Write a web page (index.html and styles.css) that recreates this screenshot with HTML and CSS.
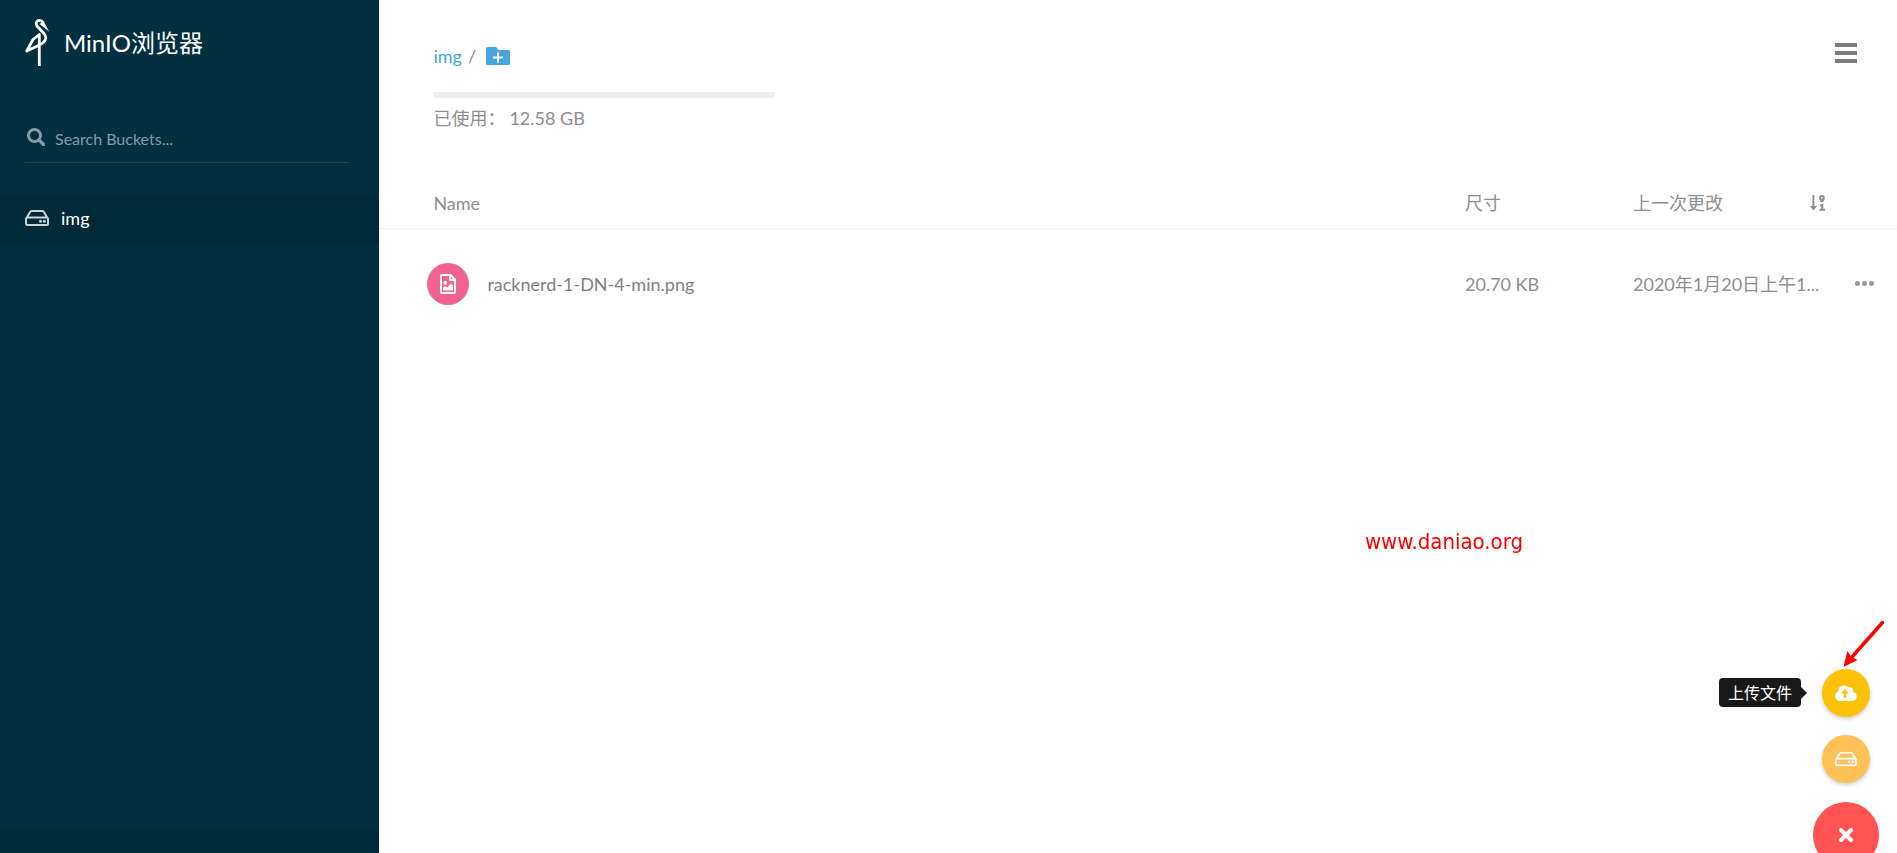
FILE: index.html
```html
<!DOCTYPE html>
<html lang="zh-CN">
<head>
  <meta charset="UTF-8" />
  <meta name="viewport" content="width=device-width, initial-scale=1.0">
  <title>MinIO浏览器</title>
  <link rel="stylesheet" href="styles.css">
</head>
<body>

<svg width="0" height="0" class="sprite" aria-hidden="true">
  <symbol id="icon-drive" viewBox="0 0 24 16">
    <path fill="none" stroke="currentColor" stroke-width="2" stroke-linejoin="round" d="M1.5 8 5.4 1.6Q5.8 1 6.6 1H17.4Q18.2 1 18.6 1.6L22.5 8M2.5 7.5H21.5Q23 7.5 23 9V13.5Q23 15 21.5 15H2.5Q1 15 1 13.5V9Q1 7.5 2.5 7.5Z"/>
    <circle cx="15.5" cy="11.2" r="1.5" fill="currentColor"/>
    <circle cx="19.4" cy="11.2" r="1.5" fill="currentColor"/>
  </symbol>
</svg>

<div class="page">
  <aside class="sidebar">
    <div class="brand">
      <svg class="logo" viewBox="0 0 24 48" aria-hidden="true">
        <path fill="none" stroke="#fff" stroke-width="2.8" stroke-linejoin="round" d="M14.3 47V15.5L8 20.5 1.8 32 14.5 26C20.500 23 22.500 19 19 14.500L12 7C10 4 12 1.4 14.500 1.4 16.500 1.4 17.500 2.500 18.500 4"/>
        <path fill="#fff" d="M14.500 5 18.800 2.600 24 12.500Z"/>
      </svg>
      <h1>MinIO浏览器</h1>
    </div>

    <label class="search">
      <svg viewBox="0 0 18 18" aria-hidden="true">
        <circle cx="7.5" cy="7.5" r="6" fill="none" stroke="currentColor" stroke-width="3"/>
        <path d="M12 12 16.5 16.5" stroke="currentColor" stroke-width="3.4" stroke-linecap="round"/>
      </svg>
      <input type="text" placeholder="Search Buckets..." aria-label="Search Buckets">
    </label>

    <nav class="buckets">
      <a class="bucket active" href="#img">
        <svg viewBox="0 0 24 16" aria-hidden="true"><use href="#icon-drive"/></svg>
        img
      </a>
    </nav>

    <div class="host"></div>
  </aside>

  <main class="content">
    <header class="topbar">
      <div class="path-info">
        <div class="path">
          <a href="#img">img</a>
          <span>/</span>
          <button class="new-path" aria-label="New path">
            <svg viewBox="0 0 24 18" aria-hidden="true">
              <path fill="currentColor" d="M2 0H9.5Q10.500 0 11 1L12 3H22.500Q24 3 24 4.500V16.500Q24 18 22.500 18H1.500Q0 18 0 16.500V2Q0 0 2 0Z"/>
              <path stroke="#fff" stroke-width="2" d="M12 5.500V15.500M7 10.500H17"/>
            </svg>
          </button>
        </div>
        <div class="usage-bar"></div>
        <div class="usage"><span>已使用：</span><span>12.58 GB</span></div>
      </div>
      <button class="menu" aria-label="Menu"><i></i><i></i><i></i></button>
    </header>

    <table class="files">
      <thead>
        <tr>
          <th class="col-name">Name</th>
          <th class="col-size">尺寸</th>
          <th class="col-date">
            <div class="sortable">
              上一次更改
              <svg viewBox="0 0 16 16" aria-hidden="true">
                <path fill="currentColor" d="M2.5 0H4.300V11H7L3.400 15.500 0 11H2.500Z"/>
                <path fill="none" stroke="currentColor" stroke-width="2" d="M13.800 2.900A1.900 1.800 0 1 1 10 2.900 1.900 1.800 0 0 1 13.800 2.900Q13.800 6.300 10.500 6.500M10 10.500 12.300 9.800V14.700M9.500 14.700H15"/>
              </svg>
            </div>
          </th>
          <th class="col-actions"></th>
        </tr>
      </thead>
      <tbody>
        <tr>
          <td class="col-name">
            <div class="file">
              <span class="file-icon">
                <svg viewBox="0 0 16 20" aria-hidden="true">
                  <path fill="none" stroke="#fff" stroke-width="2" stroke-linejoin="round" d="M2 1H10.500L15 5.500V18Q15 19 14 19H2Q1 19 1 18V2Q1 1 2 1ZM10 1V6H15"/>
                  <circle cx="5.200" cy="9" r="1.900" fill="#fff"/>
                  <path fill="#fff" d="M3 16.500V14L5 12 7 13.500 11 9.500 13 11.500V16.500Z"/>
                </svg>
              </span>
              <a href="#file">racknerd-1-DN-4-min.png</a>
            </div>
          </td>
          <td class="col-size">20.70 KB</td>
          <td class="col-date">2020年1月20日上午1...</td>
          <td class="col-actions"><button class="more" aria-label="More"><i></i><i></i><i></i></button></td>
        </tr>
      </tbody>
    </table>
  </main>
</div>

<p class="watermark">www.daniao.org</p>

<div class="fab">
  <svg class="pointer" viewBox="0 0 42 48" aria-hidden="true">
    <path stroke="#f00" stroke-width="3.5" stroke-linecap="round" d="M39.500 2.500 9 37"/>
    <path fill="#f00" d="M0.500 47 4.300 31 8 36.500 14.500 40Z"/>
  </svg>
  <div class="fab-row">
    <span class="tooltip" role="tooltip">上传文件</span>
    <button class="fab-item upload" aria-label="上传文件">
      <svg viewBox="0 0 22 16" aria-hidden="true">
        <path fill="#fff" d="M5 16A5 5 0 0 1 3 6.500 6 6 0 0 1 13.500 2.500 3.500 3.500 0 0 1 18.200 6.800 4.700 4.700 0 0 1 17.500 16Z"/>
        <path fill="#ffc107" d="M10 4 14 8.500H11.200V13H8.800V8.500H6Z"/>
      </svg>
    </button>
  </div>
  <button class="fab-item make-bucket" aria-label="Create bucket">
    <svg viewBox="0 0 24 16" aria-hidden="true"><use href="#icon-drive"/></svg>
  </button>
  <button class="fab-toggle" aria-label="Close">
    <svg viewBox="0 0 16 16" aria-hidden="true"><path stroke="#fff" stroke-width="4" stroke-linecap="round" d="M3 3 13 13M13 3 3 13"/></svg>
  </button>
</div>

</body>
</html>
```
FILE: styles.css
```css
* { box-sizing: border-box; }

body {
  margin: 0;
  color: #8e8e8e;
  background: #fff;
  font-family: Lato, "Noto Sans CJK SC", sans-serif;
  font-size: 18px;
  line-height: 24px;
  overflow: hidden;
}

a { color: inherit; text-decoration: none; }

button {
  padding: 0;
  border: 0;
  background: none;
  color: inherit;
  cursor: pointer;
}

svg { display: block; flex-shrink: 0; }

.sprite { position: absolute; }

.page {
  display: flex;
  min-height: 100vh;
}

/* sidebar */
.sidebar {
  flex: 0 0 20%;
  display: flex;
  flex-direction: column;
  background: #00303f;
}

.brand {
  display: flex;
  align-items: center;
  gap: 15px;
  height: 86px;
  padding-left: 25px;
  color: #fff;
}

.logo { width: 24px; height: 48px; }

h1 {
  margin: 0;
  font-size: 24px;
  font-weight: 400;
}

.search {
  display: flex;
  align-items: center;
  gap: 10px;
  height: 47px;
  margin: 30px 30px 30px 25px;
  padding-left: 2px;
  border-bottom: 1px solid #1c4653;
  color: #809ca4;
}

.search svg { width: 18px; height: 18px; margin-bottom: 4px; }

.search input {
  flex: 1;
  min-width: 0;
  padding: 0;
  border: 0;
  outline: 0;
  background: none;
  color: #fff;
  font: inherit;
  font-size: 16px;
}

.search input::placeholder { color: #809ca4; opacity: 1; }

.bucket {
  display: flex;
  align-items: center;
  gap: 12px;
  height: 52px;
  padding: 0 0 2px 25px;
  color: #fff;
}

.bucket svg { width: 24px; height: 16px; color: #ccd5d8; }

.active { background: #002a37; }

.host {
  height: 22px;
  margin-top: auto;
  background: #002a37;
}

/* content */
.content { flex: 1; min-width: 0; }

.topbar {
  display: flex;
  justify-content: space-between;
  height: 179px;
  padding: 44px 40px 0 54px;
}

.path {
  display: flex;
  align-items: center;
  gap: 6px;
}

.path a, .new-path { color: #46a5e0; }
.new-path { margin-left: 4px; }
.new-path svg { width: 24px; height: 18px; }

.usage-bar {
  width: 342px;
  height: 6px;
  margin: 24px 0 8px;
  border-radius: 2px;
  background: #eee;
}

.usage { display: flex; gap: 4px; }

.menu {
  display: flex;
  flex-direction: column;
  gap: 4px;
  margin-top: -1px;
  align-self: flex-start;
}

.menu i { width: 22px; height: 4px; background: #7b7b7b; }

.files {
  width: 100%;
  table-layout: fixed;
  border-collapse: collapse;
}

.files th, .files td {
  padding: 0;
  font-weight: 400;
  text-align: left;
  white-space: nowrap;
}

.files th { height: 49px; border-bottom: 1px solid #eee; }
.files td { height: 111px; }

.files th.col-name { padding-left: 54px; }
.files td.col-name { padding-left: 48px; }
.files .col-size { width: 168px; }
.files .col-date { width: 193px; }
.files .col-actions { width: 71px; padding-left: 29px; }

.sortable {
  display: flex;
  align-items: center;
  justify-content: space-between;
}

.sortable svg { width: 16px; height: 16px; }

.file {
  display: flex;
  align-items: center;
  gap: 18px;
  color: #818181;
}

.file-icon {
  display: flex;
  align-items: center;
  justify-content: center;
  width: 42px;
  height: 42px;
  border-radius: 50%;
  background: #f06292;
}

.file-icon svg { width: 16px; height: 20px; }

.more { display: flex; gap: 2px; }
.more i { width: 5px; height: 5px; border-radius: 50%; background: #999; }

/* floating things */
.watermark {
  position: fixed;
  top: 530px;
  right: 374px;
  margin: 0;
  color: #f00;
  font-family: "DejaVu Sans Condensed", "Noto Sans", sans-serif;
  font-size: 22px;
}

.fab {
  position: fixed;
  right: 18px;
  bottom: -15px;
  display: flex;
  flex-direction: column;
  align-items: center;
  gap: 18px;
  width: 66px;
}

.fab-row { position: relative; }

.fab-item, .fab-toggle {
  display: flex;
  align-items: center;
  justify-content: center;
  border-radius: 50%;
}

.fab-item {
  width: 48px;
  height: 48px;
  color: #fff;
  box-shadow: 0 2px 4px rgba(0, 0, 0, 0.2);
}

.fab-item svg { width: 22px; height: 16px; }

.upload { background: #ffc107; }
.make-bucket { margin-bottom: 1px; background: #ffc155; }

.fab-toggle {
  width: 66px;
  height: 66px;
  background: #ff5252;
  box-shadow: 0 2px 3px rgba(0, 0, 0, 0.15);
}

.fab-toggle svg { width: 16px; height: 16px; }

.tooltip {
  position: absolute;
  top: 9px;
  right: 69px;
  padding: 3px 9px 2px;
  border-radius: 4px;
  background: #191919;
  color: #fff;
  font-size: 16px;
  white-space: nowrap;
}

.tooltip::after {
  content: "";
  position: absolute;
  top: 9px;
  left: 100%;
  border: 6px solid transparent;
  border-left-color: #191919;
  border-right: 0;
}

.pointer {
  position: absolute;
  right: -6px;
  bottom: 200px;
  width: 42px;
  height: 48px;
}
```
